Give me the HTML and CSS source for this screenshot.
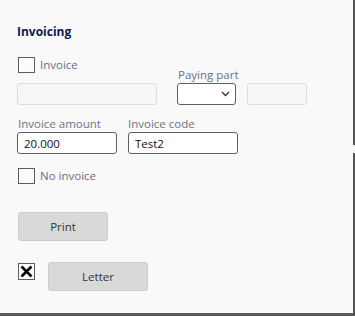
FILE: index.html
```html
<!DOCTYPE html>
<html lang="en">
<head>
    <meta charset="UTF-8">
    <meta name="viewport" content="width=device-width, initial-scale=1.0">
    <title>Invoicing</title>
    <link rel="stylesheet" href="styles.css">
</head>
<body>
    <div class="panel">
        <div class="title">Invoicing</div>

        <!-- Invoice / paying part row -->
        <div class="row row-invoice">
            <div class="col col-invoice">
                <label class="check">
                    <span class="box"></span>
                    <span class="check-label">Invoice</span>
                </label>
                <input class="field field-disabled" type="text" disabled>
            </div>
            <div class="col col-paying">
                <span class="label">Paying part</span>
                <div class="select">
                    <svg width="9" height="6" viewBox="0 0 9 6">
                        <path d="M1 1 L4.5 4.5 L8 1" fill="none" stroke="#333" stroke-width="1.3"/>
                    </svg>
                </div>
            </div>
            <input class="field field-disabled field-small" type="text" disabled>
        </div>

        <!-- Amount / code row -->
        <div class="row row-amount">
            <div class="col">
                <span class="label">Invoice amount</span>
                <input class="field field-amount" type="text" value="20.000">
            </div>
            <div class="col">
                <span class="label">Invoice code</span>
                <input class="field field-code" type="text" value="Test2">
            </div>
        </div>

        <label class="check check-noinvoice">
            <span class="box"></span>
            <span class="check-label">No invoice</span>
        </label>

        <button class="btn btn-print">Print</button>

        <div class="row row-letter">
            <span class="box box-x">
                <svg width="15" height="15" viewBox="0 0 15 15">
                    <path d="M2.5 2.5 L12.5 12.5 M12.5 2.5 L2.5 12.5" stroke="#000" stroke-width="2.6"/>
                </svg>
            </span>
            <button class="btn btn-letter">Letter</button>
        </div>
    </div>
</body>
</html>
```

FILE: styles.css
```css
/* General styles */
body {
    margin: 0;
    background-color: #f9f9f9;
    font-family: "Open Sans", "Noto Sans", Arial, sans-serif;
    font-size: 11.5px;
    color: #222;
}

.panel {
    position: relative;
    box-sizing: border-box;
    width: 355px;
    height: 316px;
    padding: 24px 0 0 17px;
    border-right: 2px solid #555;
    border-bottom: 3px solid #5a5a5a;
    display: flex;
    flex-direction: column;
    align-items: flex-start;
}

/* small break in the right edge */
.panel::after {
    content: "";
    position: absolute;
    right: -2px;
    top: 145px;
    width: 2px;
    height: 8px;
    background-color: #f4f4f4;
}

.title {
    font-weight: bold;
    font-size: 12px;
    line-height: 16px;
    color: #0c1a4d;
}

.row {
    display: flex;
}

.col {
    display: flex;
    flex-direction: column;
}

.label {
    line-height: 16px;
    color: #6c7284;
    white-space: nowrap;
}

/* Checkboxes */
.check {
    display: flex;
    align-items: center;
    gap: 5px;
    margin-left: 1px;
    height: 16px;
}

.box {
    box-sizing: border-box;
    width: 17px;
    height: 16px;
    border: 1px solid #5c5c5c;
    background-color: #fcfcfc;
    display: block;
}

.check-label {
    color: #6f6a80;
    line-height: 16px;
}

/* Inputs */
.field {
    box-sizing: border-box;
    height: 22px;
    border: 1px solid #5f5f5f;
    border-radius: 3px;
    background-color: #fff;
    padding: 0 6px;
    font-family: inherit;
    font-size: 11.5px;
    color: #111;
    outline: none;
}

.field-disabled {
    border-color: #dcdcdc;
    background-color: #f7f7f7;
}

.row-invoice {
    margin-top: 17px;
    align-items: flex-end;
}

.col-invoice {
    gap: 10px;
    width: 140px;
}

.col-invoice .field {
    width: 140px;
}

.col-paying {
    width: 59px;
    margin-left: 20px;
}

.col-paying .label {
    margin-left: 1px;
}

.select {
    box-sizing: border-box;
    width: 59px;
    height: 22px;
    border: 1px solid #5f5f5f;
    border-radius: 3px;
    background-color: #fff;
    display: flex;
    align-items: center;
    justify-content: flex-end;
    padding-right: 5px;
}

.field-small {
    width: 60px;
    margin-left: 11px;
}

.row-amount {
    margin-top: 11px;
    gap: 10px;
}

.row-amount .label {
    margin-left: 1px;
}

.field-amount {
    width: 100px;
}

.field-code {
    width: 110px;
    margin-left: 1px;
}

.check-noinvoice {
    margin-top: 14px;
}

/* Buttons */
.btn {
    box-sizing: border-box;
    height: 29px;
    border: 1px solid #cdcdcd;
    border-radius: 3px;
    background-color: #d9d9d9;
    font-family: inherit;
    font-size: 11.5px;
    color: #333;
    cursor: pointer;
}

.btn-print {
    width: 90px;
    margin: 28px 0 0 1px;
}

.row-letter {
    margin: 21px 0 0 1px;
    align-items: flex-start;
}

.box-x {
    margin-top: 1px;
    height: 17px;
    display: flex;
    align-items: center;
    justify-content: center;
}

.btn-letter {
    width: 100px;
    margin-left: 13px;
}
```
